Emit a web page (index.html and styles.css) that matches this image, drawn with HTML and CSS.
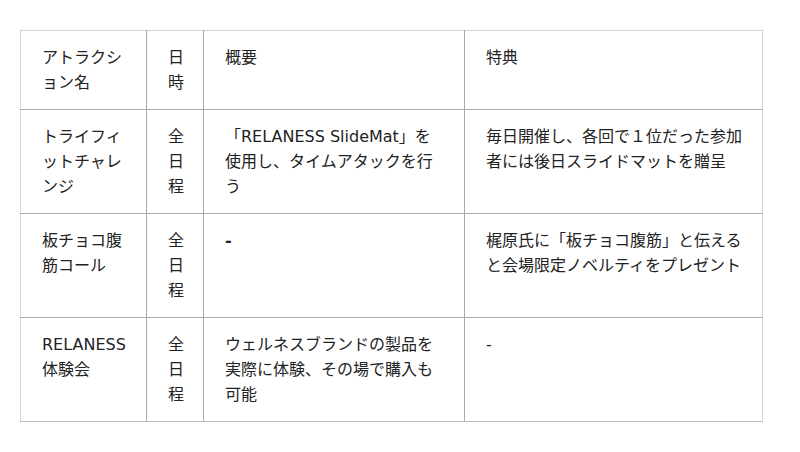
FILE: index.html
```html
<!DOCTYPE html>
<html lang="ja">
<head>
<meta charset="utf-8">
<link rel="stylesheet" href="styles.css">
</head>
<body>
<div class="wrap">
<table class="events">
  <colgroup>
    <col class="c1"><col class="c2"><col class="c3"><col class="c4">
  </colgroup>
  <tr>
    <td>アトラクション名</td>
    <td>日時</td>
    <td>概要</td>
    <td>特典</td>
  </tr>
  <tr>
    <td>トライフィットチャレンジ</td>
    <td>全日程</td>
    <td>「RELANESS SlideMat」を使用し、タイムアタックを行う</td>
    <td>毎日開催し、各回で１位だった参加者には後日スライドマットを贈呈</td>
  </tr>
  <tr>
    <td>板チョコ腹筋コール</td>
    <td>全日程</td>
    <td><b class="dash">-</b></td>
    <td>梶原氏に「板チョコ腹筋」と伝えると会場限定ノベルティをプレゼント</td>
  </tr>
  <tr>
    <td>RELANESS 体験会</td>
    <td>全日程</td>
    <td>ウェルネスブランドの製品を実際に体験、その場で購入も可能</td>
    <td>-</td>
  </tr>
</table>
</div>
</body>
</html>
```

FILE: styles.css
```css
html, body {
  margin: 0;
  padding: 0;
  background: #fff;
}
.wrap {
  padding: 30px 20px;
}
.events {
  border-collapse: collapse;
  table-layout: fixed;
  width: 742px;
  font-family: "DejaVu Sans", "Noto Sans CJK JP", sans-serif;
  font-size: 16px;
  line-height: 25px;
  color: #222;
  border: 1px solid #d4d4d4;
}
.c1 { width: 126px; }
.c2 { width: 57px; }
.c3 { width: 261px; }
.c4 { width: 298px; }
.events td {
  border: 1px solid #aaa;
  padding: 14px 20px 14px 21px;
  vertical-align: top;
  text-align: left;
  word-break: break-all;
}
.events tr:first-child td { border-top-color: #d4d4d4; }
.events tr:last-child td { border-bottom-color: #bbb; }
.events td:first-child { border-left-color: #d4d4d4; }
.events td:last-child { border-right-color: #d4d4d4; }
.dash { font-weight: bold; }
```
